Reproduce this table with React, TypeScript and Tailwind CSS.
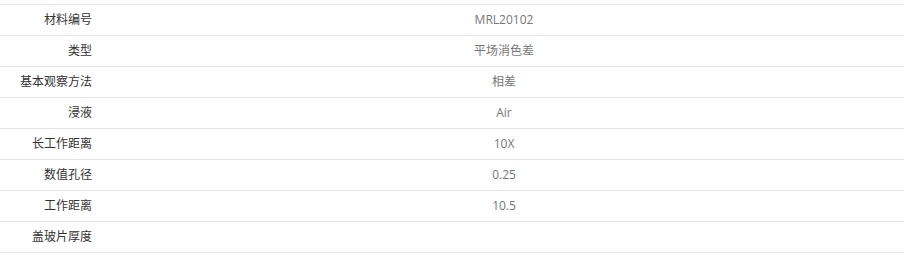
const rows: [string, string][] = [
  ['材料编号', 'MRL20102'],
  ['类型', '平场消色差'],
  ['基本观察方法', '相差'],
  ['浸液', 'Air'],
  ['长工作距离', '10X'],
  ['数值孔径', '0.25'],
  ['工作距离', '10.5'],
  ['盖玻片厚度', ''],
];

export default function App() {
  return (
    <div
      className="bg-white pt-1 w-[917px] h-[266px]"
      style={{ fontFamily: '"Open Sans", "Noto Sans CJK SC", sans-serif' }}
    >
      <table className="w-[904px] border-collapse text-[12px]">
        <tbody>
          {rows.map(([label, value]) => (
            <tr key={label} className="h-[31px] border-y border-[#e6e6e6]">
              <td className="w-[104px] pr-3 text-right text-[#333] whitespace-nowrap">{label}</td>
              <td className="text-center text-[#777]">{value}</td>
            </tr>
          ))}
        </tbody>
      </table>
    </div>
  );
}
